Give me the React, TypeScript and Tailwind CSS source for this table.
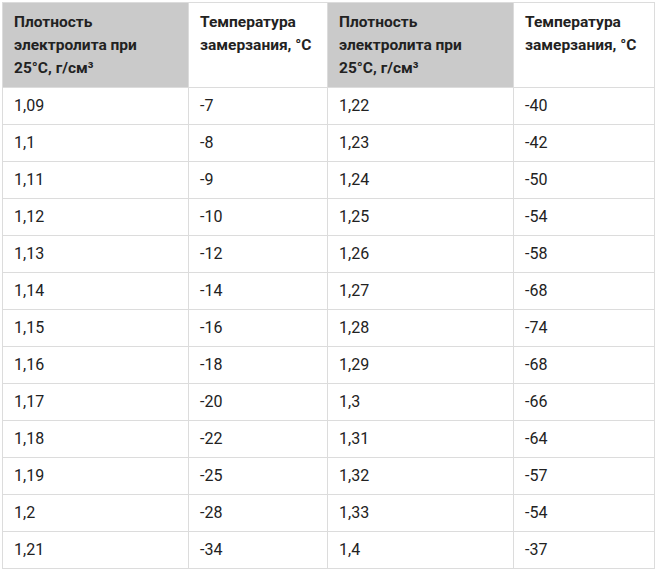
const rows: [string, string, string, string][] = [
  ["1,09", "-7", "1,22", "-40"],
  ["1,1", "-8", "1,23", "-42"],
  ["1,11", "-9", "1,24", "-50"],
  ["1,12", "-10", "1,25", "-54"],
  ["1,13", "-12", "1,26", "-58"],
  ["1,14", "-14", "1,27", "-68"],
  ["1,15", "-16", "1,28", "-74"],
  ["1,16", "-18", "1,29", "-68"],
  ["1,17", "-20", "1,3", "-66"],
  ["1,18", "-22", "1,31", "-64"],
  ["1,19", "-25", "1,32", "-57"],
  ["1,2", "-28", "1,33", "-54"],
  ["1,21", "-34", "1,4", "-37"],
];

function DensityHead() {
  return (
    <th className="w-[186px] border border-[#dcdcdc] bg-[#cacaca] pl-[11px] pr-3 pt-[8px] pb-[6px] text-left align-top text-[15.5px] leading-[23px] font-bold">
      Плотность электролита при 25°C, г/см³
    </th>
  );
}

function TempHead({ w }: { w: string }) {
  return (
    <th className={`${w} border border-[#dcdcdc] bg-white pl-[11px] pr-1 pt-[8px] pb-[6px] text-left align-top text-[15.5px] leading-[23px] font-bold`}>
      Температура замерзания, °C
    </th>
  );
}

export default function App() {
  return (
    <div className="h-[570px] w-[658px] bg-white pt-[2px] pl-[2px] font-['Roboto',sans-serif] text-[#222]">
      <table className="w-[653px] table-fixed border-collapse">
        <thead>
          <tr className="h-[85px]">
            <DensityHead />
            <TempHead w="w-[139px]" />
            <DensityHead />
            <TempHead w="w-[141px]" />
          </tr>
        </thead>
        <tbody>
          {rows.map((r, i) => (
            <tr key={i} className="h-[37px]">
              {r.map((c, j) => (
                <td key={j} className="border border-[#dcdcdc] pl-[11px] pr-3 py-0 align-middle text-[16px] leading-5">
                  {c}
                </td>
              ))}
            </tr>
          ))}
        </tbody>
      </table>
    </div>
  );
}
